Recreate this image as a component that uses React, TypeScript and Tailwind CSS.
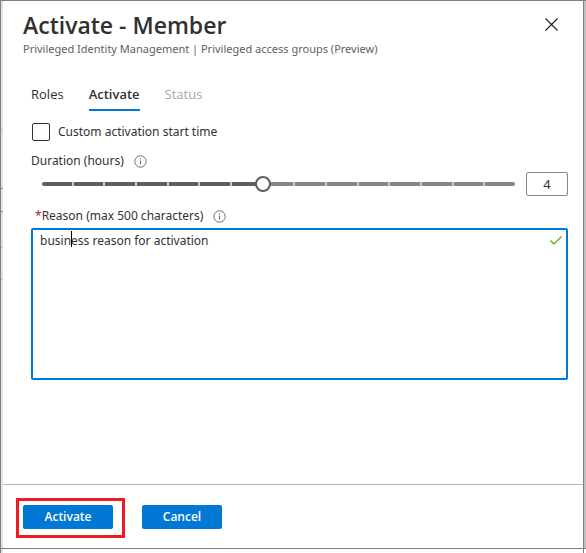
import { useState } from "react";

const STEPS = 15;

function InfoIcon() {
  return (
    <svg width="13" height="13" viewBox="0 0 13 13" fill="none" aria-hidden="true">
      <circle cx="6.5" cy="6.5" r="5.7" stroke="#706e6c" strokeWidth="1" />
      <path d="M6.5 5.5V9.5" stroke="#706e6c" strokeWidth="1.1" />
      <path d="M6.5 3.3V4.5" stroke="#706e6c" strokeWidth="1.1" />
    </svg>
  );
}

function BackdropEdge() {
  return (
    <div className="flex w-[3px] shrink-0 flex-col border-l border-[#7f7f7f] bg-[#e3e3e3]" aria-hidden="true">
      <i className="mt-[128px] h-px bg-[#c4c4c4]" />
      <i className="mt-[58px] h-px bg-[#7f7f7f]" />
      <i className="mt-[22px] h-px bg-[#7f7f7f]" />
      <i className="mt-[35px] h-px bg-[#c4c4c4]" />
      <i className="mt-[31px] h-px bg-[#c4c4c4]" />
    </div>
  );
}

export default function App() {
  const [hours, setHours] = useState(4);
  const [reason, setReason] = useState("business reason for activation");
  const filled = (hours - 0.5) * 2;

  return (
    <div className="flex min-h-screen flex-col bg-white font-['Noto_Sans','Open_Sans',sans-serif] text-[12px] leading-4 text-[#323130]">
      <div className="flex flex-1 border-t border-[#7f7f7f]">
        <BackdropEdge />
        <main className="flex min-w-0 flex-1 flex-col">
          <header className="flex items-start justify-between pt-2 pr-6 pl-5">
            <div>
              <h1 className="font-['Open_Sans',sans-serif] text-[23px] leading-8 font-semibold">Activate - Member</h1>
              <p className="text-[11px] leading-4 text-[#605e5c]">
                Privileged Identity Management | Privileged access groups (Preview)
              </p>
            </div>
            <button type="button" aria-label="Close" className="mt-2 p-px">
              <svg width="13" height="13" viewBox="0 0 13 13" fill="none">
                <path d="M0.5 0.5L12.5 12.5M12.5 0.5L0.5 12.5" stroke="#201f1e" strokeWidth="1.1" />
              </svg>
            </button>
          </header>

          <section className="flex flex-1 flex-col pt-[27px] pr-[15px] pl-7">
            <nav className="flex gap-[25px] font-['Open_Sans',sans-serif] text-[13px]">
              <button type="button" className="h-[27px] pb-[7px]">Roles</button>
              <button type="button" className="h-[27px] border-b-2 border-[#0078d4] pb-[5px] font-semibold">
                Activate
              </button>
              <button type="button" disabled className="h-[27px] pb-[7px] text-[#a6a6a6]">Status</button>
            </nav>

            <label className="mt-3 flex items-center gap-2 pl-px">
              <input
                type="checkbox"
                className="size-[18px] appearance-none rounded-xs border border-[#323130] bg-white checked:bg-[#0078d4]"
              />
              Custom activation start time
            </label>

            <div className="mt-3 flex items-center gap-2.5">
              <label htmlFor="duration">Duration (hours)</label>
              <InfoIcon />
            </div>

            <div className="mt-[3px] flex items-center">
              <div className="mr-[3px] ml-[3px] grid flex-1 items-center">
                <div className="col-start-1 row-start-1 mx-2 flex h-1 overflow-hidden rounded-full">
                  {Array.from({ length: STEPS }, (_, i) => (
                    <div
                      key={i}
                      className={`flex-1 border-r-2 border-[#c8c8c8] last:border-r-0 ${i < filled ? "bg-[#605e5c]" : "bg-[#8a8886]"}`}
                    />
                  ))}
                </div>
                <input
                  id="duration"
                  type="range"
                  min={0.5}
                  max={8}
                  step={0.5}
                  value={hours}
                  onChange={(e) => setHours(Number(e.target.value))}
                  className="col-start-1 row-start-1 h-4 w-full appearance-none bg-transparent [&::-webkit-slider-thumb]:size-4 [&::-webkit-slider-thumb]:appearance-none [&::-webkit-slider-thumb]:rounded-full [&::-webkit-slider-thumb]:border-2 [&::-webkit-slider-thumb]:border-[#605e5c] [&::-webkit-slider-thumb]:bg-white"
                />
              </div>
              <input
                type="text"
                aria-label="Hours"
                value={hours}
                onChange={(e) => setHours(Number(e.target.value) || 0.5)}
                className="h-6 w-[42px] rounded-xs border border-[#8a8886] text-center text-[13px]"
              />
            </div>

            <div className="mt-3 flex items-center gap-2.5 pl-1">
              <label htmlFor="reason">
                <span className="text-[#a4262c]">*</span>Reason (max 500 characters)
              </label>
              <InfoIcon />
            </div>

            <div className="relative mt-1 flex">
              <textarea
                id="reason"
                maxLength={500}
                value={reason}
                onChange={(e) => setReason(e.target.value)}
                className="h-[152px] w-full resize-none rounded-xs border-2 border-[#0078d4] px-[7px] py-[3px] outline-none"
              />
              <span className="absolute top-[3px] left-10 h-4 w-px bg-black" />
              <svg className="absolute top-2 right-1.5" width="12" height="9" viewBox="0 0 12 9" fill="none">
                <path d="M0.5 4.5L4 8L11.5 0.5" stroke="#57a300" strokeWidth="1.1" />
              </svg>
            </div>
          </section>

          <footer className="flex items-start gap-[17px] border-t border-[#b3b3b3] px-[13px] pt-[13px] pb-2.5 font-['Open_Sans',sans-serif] leading-5 font-semibold text-white">
            <div className="border-[3px] border-[#ed1c24] pt-1 pr-[9px] pb-1.5 pl-1">
              <button type="button" className="h-6 w-[90px] rounded-xs bg-[#0078d4]">Activate</button>
            </div>
            <button type="button" className="mt-[7px] h-6 w-20 rounded-xs bg-[#0078d4]">Cancel</button>
          </footer>
        </main>
        <div className="w-[3px] shrink-0 border-l border-[#7f7f7f] bg-[#c0c0c0]" />
      </div>
      <div className="flex h-[5px] justify-between border-t border-[#7f7f7f]">
        <div className="w-[3px] border-l border-[#7f7f7f] bg-[#e3e3e3]" />
        <div className="w-[3px] border-l border-[#7f7f7f]" />
      </div>
    </div>
  );
}
